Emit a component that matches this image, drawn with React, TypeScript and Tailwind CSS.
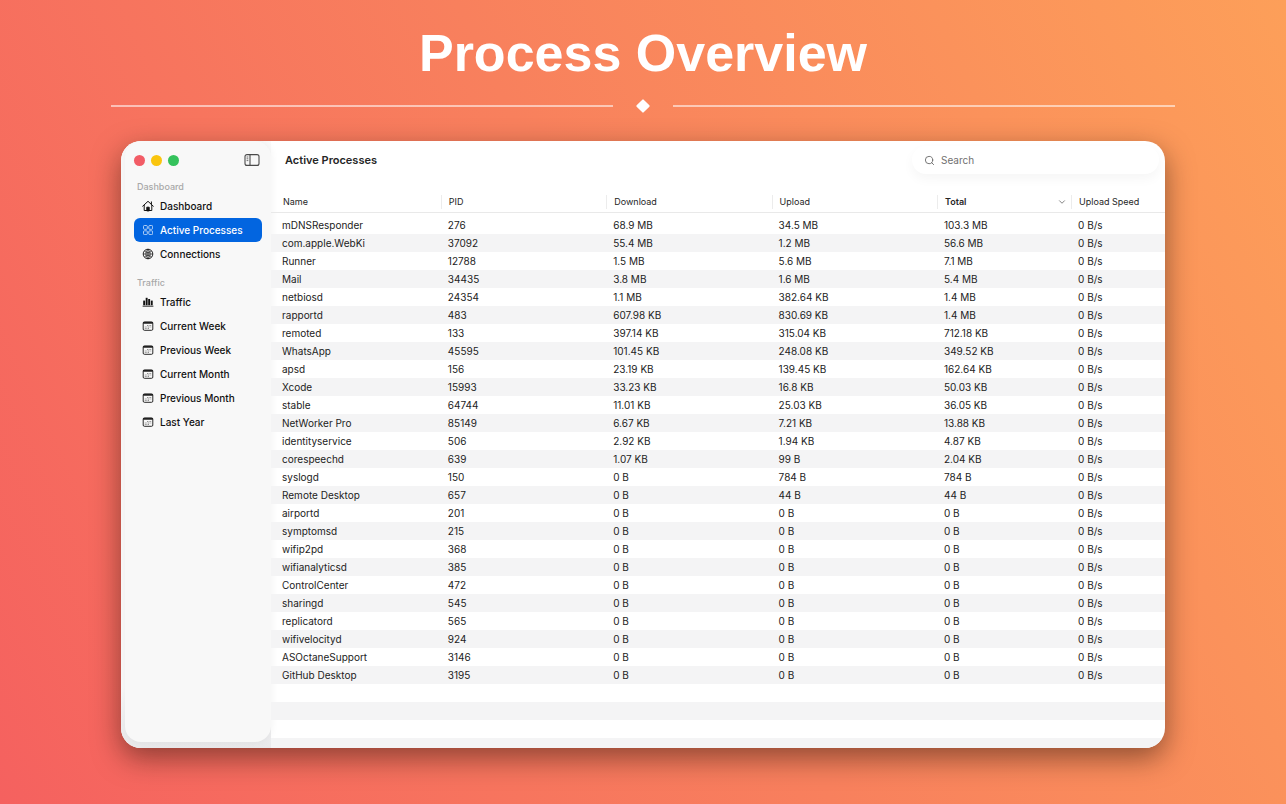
import { ChevronDown, Search } from 'lucide-react';
import clsx from 'clsx';

type IconProps = { className?: string };

const HomeIcon = ({ className }: IconProps) => (
  <svg viewBox="0 0 12 12" className={className} fill="none" stroke="currentColor" strokeWidth="1" strokeLinecap="round" strokeLinejoin="round">
    <path d="M0.7 6.2 6 1.3l5.3 4.9" />
    <path d="M9.4 4V1.9" />
    <path d="M2.2 5.4v5.1h7.6V5.4" />
    <path d="M4.8 10.5V7.2h2.4v3.3z" fill="currentColor" />
  </svg>
);

const GridIcon = ({ className }: IconProps) => (
  <svg viewBox="0 0 12 12" className={className} fill="none" stroke="currentColor" strokeWidth="0.8" opacity="0.85">
    <rect x="1.5" y="1.5" width="3.8" height="3.8" rx="0.9" />
    <rect x="6.8" y="1.5" width="3.8" height="3.8" rx="0.9" />
    <rect x="1.5" y="6.8" width="3.8" height="3.8" rx="0.9" />
    <rect x="6.8" y="6.8" width="3.8" height="3.8" rx="0.9" />
  </svg>
);

const NetworkIcon = ({ className }: IconProps) => (
  <svg viewBox="0 0 12 12" className={className} fill="none" stroke="currentColor" strokeWidth="0.7">
    <circle cx="6" cy="6" r="4.8" strokeWidth="0.9" />
    <path d="M6 1.2v9.6M1.2 6h9.6" />
    <path d="M2.4 2.9C4.4 5 7.6 5 9.6 2.9M2.4 9.1C4.4 7 7.6 7 9.6 9.1" />
    <path d="M6 1.2C3.2 4 3.2 8 6 10.8M6 1.2c2.8 2.8 2.8 6.8 0 9.6" />
  </svg>
);

const BarsIcon = ({ className }: IconProps) => (
  <svg viewBox="0 0 12 12" className={className} fill="currentColor">
    <rect x="1.2" y="4.6" width="1.9" height="4.6" />
    <rect x="3.7" y="1.8" width="1.9" height="7.4" />
    <rect x="6.2" y="3" width="1.9" height="6.2" />
    <rect x="8.8" y="4.6" width="1.9" height="4.6" />
    <rect x="0.6" y="9.7" width="10.8" height="0.9" />
  </svg>
);

const CalendarIcon = ({ className }: IconProps) => (
  <svg viewBox="0 0 12 12" className={className} fill="none" stroke="currentColor">
    <rect x="1.2" y="1.9" width="9.6" height="8.4" rx="1.2" strokeWidth="0.9" />
    <path d="M1.2 2.9h9.6" strokeWidth="1.6" />
    <path d="M5 5.5h4.4M2.8 7h6.6M2.8 8.5h4.6" strokeWidth="0.9" strokeDasharray="1 0.6" opacity="0.5" />
  </svg>
);

const SidebarIcon = ({ className }: IconProps) => (
  <svg viewBox="0 0 16 14" className={className} fill="none" stroke="currentColor" strokeWidth="1.1">
    <rect x="1" y="1.6" width="14" height="10.8" rx="2" />
    <path d="M6 1.6v10.8" />
    <path d="M2.6 4h1.7M2.6 5.8h1.7M2.6 7.6h1.7" strokeWidth="0.8" />
  </svg>
);

const sections = [
  {
    title: 'Dashboard',
    items: [
      { label: 'Dashboard', icon: HomeIcon },
      { label: 'Active Processes', icon: GridIcon, active: true },
      { label: 'Connections', icon: NetworkIcon },
    ],
  },
  {
    title: 'Traffic',
    items: [
      { label: 'Traffic', icon: BarsIcon },
      { label: 'Current Week', icon: CalendarIcon },
      { label: 'Previous Week', icon: CalendarIcon },
      { label: 'Current Month', icon: CalendarIcon },
      { label: 'Previous Month', icon: CalendarIcon },
      { label: 'Last Year', icon: CalendarIcon },
    ],
  },
];

const columns = ['Name', 'PID', 'Download', 'Upload', 'Total', 'Upload Speed'];

// name, pid, download, upload, total
const processes = [
  ['mDNSResponder', '276', '68.9 MB', '34.5 MB', '103.3 MB'],
  ['com.apple.WebKi', '37092', '55.4 MB', '1.2 MB', '56.6 MB'],
  ['Runner', '12788', '1.5 MB', '5.6 MB', '7.1 MB'],
  ['Mail', '34435', '3.8 MB', '1.6 MB', '5.4 MB'],
  ['netbiosd', '24354', '1.1 MB', '382.64 KB', '1.4 MB'],
  ['rapportd', '483', '607.98 KB', '830.69 KB', '1.4 MB'],
  ['remoted', '133', '397.14 KB', '315.04 KB', '712.18 KB'],
  ['WhatsApp', '45595', '101.45 KB', '248.08 KB', '349.52 KB'],
  ['apsd', '156', '23.19 KB', '139.45 KB', '162.64 KB'],
  ['Xcode', '15993', '33.23 KB', '16.8 KB', '50.03 KB'],
  ['stable', '64744', '11.01 KB', '25.03 KB', '36.05 KB'],
  ['NetWorker Pro', '85149', '6.67 KB', '7.21 KB', '13.88 KB'],
  ['identityservice', '506', '2.92 KB', '1.94 KB', '4.87 KB'],
  ['corespeechd', '639', '1.07 KB', '99 B', '2.04 KB'],
  ['syslogd', '150', '0 B', '784 B', '784 B'],
  ['Remote Desktop', '657', '0 B', '44 B', '44 B'],
  ['airportd', '201', '0 B', '0 B', '0 B'],
  ['symptomsd', '215', '0 B', '0 B', '0 B'],
  ['wifip2pd', '368', '0 B', '0 B', '0 B'],
  ['wifianalyticsd', '385', '0 B', '0 B', '0 B'],
  ['ControlCenter', '472', '0 B', '0 B', '0 B'],
  ['sharingd', '545', '0 B', '0 B', '0 B'],
  ['replicatord', '565', '0 B', '0 B', '0 B'],
  ['wifivelocityd', '924', '0 B', '0 B', '0 B'],
  ['ASOctaneSupport', '3146', '0 B', '0 B', '0 B'],
  ['GitHub Desktop', '3195', '0 B', '0 B', '0 B'],
];

const Sidebar = () => (
  <aside className="flex w-[150px] shrink-0 bg-linear-to-b from-[#fafafa] from-90% to-[#e9e9eb] pb-1.5 pl-1">
    <div className="flex-1 rounded-[16px] bg-[#f8f8f8] px-[9px] shadow-[0_0_8px_rgba(0,0,0,0.06)]">
      <div className="flex h-[38px] items-center justify-between pr-0.5">
        <div className="flex gap-1.5">
          <span className="size-[11px] rounded-full bg-[#f25c66]" />
          <span className="size-[11px] rounded-full bg-[#fac50e]" />
          <span className="size-[11px] rounded-full bg-[#35c25c]" />
        </div>
        <button type="button" aria-label="Toggle sidebar" className="text-[#4a4a4a]">
          <SidebarIcon className="h-3.5 w-4" />
        </button>
      </div>

      {sections.map((section) => (
        <nav key={section.title} aria-label={section.title} className="mb-[9px]">
          <h2 className="flex h-[15px] items-center pl-[3px] text-[9px] font-medium text-[#a8a8a8]">{section.title}</h2>
          {section.items.map(({ label, icon: Icon, ...item }) => (
            <button
              key={label}
              type="button"
              className={clsx(
                'flex h-6 w-full items-center gap-1.5 rounded-md pl-2 text-[10px] font-medium whitespace-nowrap',
                'active' in item ? 'bg-[#0265e0] text-white' : 'text-[#111]'
              )}
            >
              <Icon className="size-3 shrink-0" />
              {label}
            </button>
          ))}
        </nav>
      ))}
    </div>
  </aside>
);

const ProcessTable = () => (
  <table className="w-full table-fixed border-collapse text-left whitespace-nowrap">
    <colgroup>
      <col className="w-[19%]" />
      <col className="w-[18.5%]" />
      <col className="w-[18.5%]" />
      <col className="w-[18.5%]" />
      <col className="w-[15%]" />
      <col />
    </colgroup>
    <thead>
      <tr className="h-5 border-b border-[#e9e9e9] text-[9px] text-[#262626]">
        {columns.map((column, i) => (
          <th key={column} className={clsx('p-0', column === 'Total' ? 'font-semibold' : 'font-normal')}>
            <div className={clsx('flex h-3.5 items-center justify-between pr-1', i === 0 ? 'pl-3' : 'border-l border-[#ececec] pl-[7px]')}>
              {column}
              {column === 'Total' && <ChevronDown className="size-2.5 text-[#6b6b6b]" strokeWidth={2} />}
            </div>
          </th>
        ))}
      </tr>
    </thead>
    <tbody className="text-[10px] text-[#222]">
      <tr className="h-1" />
      {processes.map(([name, ...values]) => (
        <tr key={name} className="h-[18px] odd:bg-[#f4f4f5]">
          <td className="p-0 pl-[11px]">{name}</td>
          {[...values, '0 B/s'].map((value, i) => (
            <td key={i} className="p-0 pl-[7px]">{value}</td>
          ))}
        </tr>
      ))}
      {/* Empty rows keep the striping down to the window edge */}
      <tr><td colSpan={6} className="h-[18px] p-0" /></tr>
      <tr><td colSpan={6} className="h-[18px] bg-[#f4f4f5] p-0" /></tr>
      <tr><td colSpan={6} className="h-[18px] p-0" /></tr>
      <tr><td colSpan={6} className="h-2.5 bg-[#f4f4f5] p-0" /></tr>
    </tbody>
  </table>
);

export default function App() {
  return (
    <main className="min-h-screen bg-linear-65 from-[#f5615f] via-[#f8805d] to-[#fd9f59] pb-14 font-['Inter','Liberation_Sans',sans-serif]">
      <h1 className="pt-5 text-center font-['Liberation_Sans',sans-serif] text-[52px] leading-[66px] font-bold text-white">
        Process Overview
      </h1>

      {/* Divider */}
      <div className="mx-[111px] mt-3 flex h-4 items-center gap-[25px]">
        <span className="h-0.5 flex-1 bg-white/55" />
        <span className="size-2.5 rotate-45 rounded-[1px] bg-white" />
        <span className="h-0.5 flex-1 bg-white/55" />
      </div>

      {/* Window */}
      <div className="mx-[121px] mt-[27px] flex overflow-hidden rounded-[20px] bg-white shadow-[0_10px_28px_rgba(40,20,10,0.5)]">
        <Sidebar />
        <section className="min-w-0 flex-1">
          <header className="flex h-[51px] items-start justify-between pr-1.5 pl-3.5">
            <h2 className="flex h-[38px] items-center text-[11px] font-semibold text-[#262626]">Active Processes</h2>
            <label className="mt-[5px] flex h-7 w-[247px] items-center gap-1.5 rounded-full bg-white px-3 text-[#6a6a6a] shadow-[0_5px_12px_rgba(0,0,0,0.04)]">
              <Search className="size-[11px] shrink-0" strokeWidth={2} />
              <input
                type="search"
                placeholder="Search"
                aria-label="Search"
                className="w-full bg-transparent text-[10px] outline-none placeholder:text-[#707070]"
              />
            </label>
          </header>
          <ProcessTable />
        </section>
      </div>
    </main>
  );
}
